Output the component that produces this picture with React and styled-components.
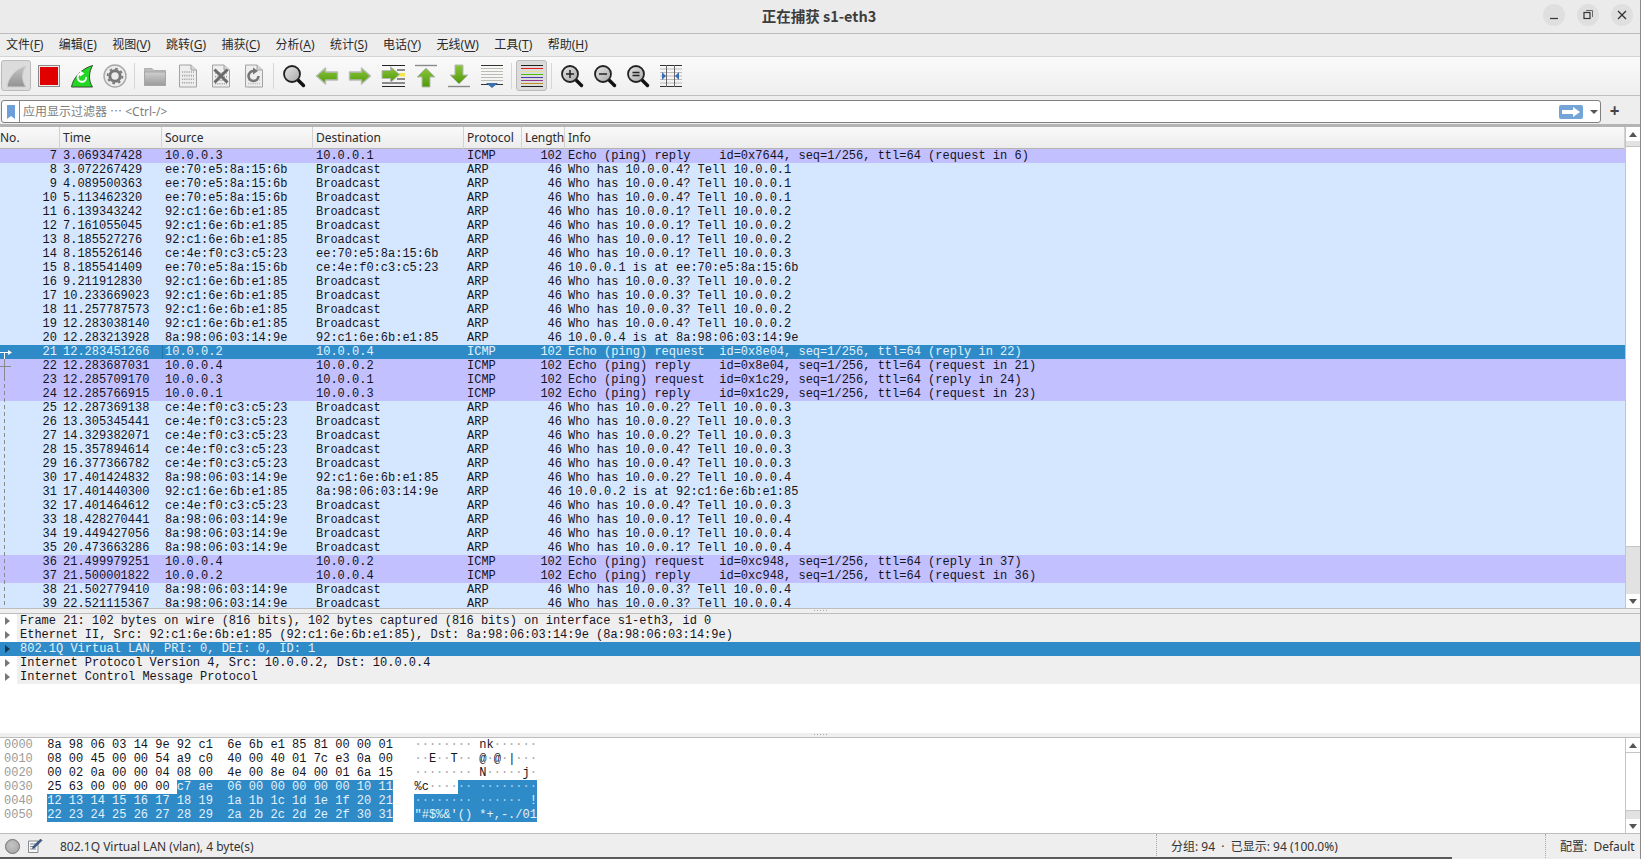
import React from "react";
import styled, { createGlobalStyle } from "styled-components";

const UI = `"Noto Sans", "Noto Sans CJK SC", sans-serif`;
const MONO = `"Liberation Mono", "Noto Sans CJK SC", monospace`;
const SELECT = "#2e8bc8";

const Global = createGlobalStyle`
  html, body { margin: 0; padding: 0; height: 100%; overflow: hidden; background: #ededed; }
  #root { height: 100%; }
  * { box-sizing: border-box; }
`;

const Window = styled.div`
  width: 1641px; height: 859px; display: flex; flex-direction: column;
  border-right: 1px solid #8c8c8c; font-family: ${UI}; font-size: 12px; color: #2a2a2a; position: relative;
`;
const TitleBar = styled.div`
  height: 34px; flex: none; background: #ebebeb; border-bottom: 1px solid #bdbdbd;
  display: flex; align-items: center; justify-content: center; position: relative;
`;
const Title = styled.div`
  font-family: "Noto Sans CJK SC", "Noto Sans", sans-serif; font-weight: 700; font-size: 14.5px; color: #3d3d3d; margin-top: -3px; margin-right: 2px;
`;
const WinButtons = styled.div`
  position: absolute; right: 7px; top: 4px; display: flex; gap: 12px;
`;
const WinButton = styled.div`
  width: 22px; height: 22px; border-radius: 50%; background: #dfdfdf; display: flex; align-items: center; justify-content: center;
`;
const MenuBar = styled.div`
  height: 23px; flex: none; background: #ededed; border-bottom: 1px solid #d4d4d4; display: flex; align-items: center; gap: 15.4px; padding-left: 6px;
`;
const MenuItem = styled.span`
  font-size: 12px; line-height: 16px; color: #2a2a2a; white-space: nowrap;
`;
const Mnemonic = styled.span`
  text-decoration: underline; text-underline-offset: 2px;
`;
const ToolBar = styled.div`
  height: 39px; flex: none; background: linear-gradient(#fafafa, #efefef); border-bottom: 1px solid #bfbfbf; display: flex; align-items: center; padding-bottom: 1px;
`;
const ToolButton = styled.div`
  width: ${(p) => (p.$first ? 32 : 33)}px; height: 31px; flex: none; display: flex; align-items: center; justify-content: center; position: relative;
  &::before {
    content: ""; display: ${(p) => (p.$active ? "block" : "none")}; position: absolute; inset: 0 1px;
    background: #dcdcdc; border: 1px solid #bababa; border-radius: 3px;
  }
  & > svg { position: relative; }
`;
const ToolSep = styled.div`
  width: 7px; flex: none; height: 26px; display: flex; justify-content: center;
  &::before { content: ""; width: 1px; background: #d6d6d6; }
`;
const FilterBar = styled.div`
  height: 31px; flex: none; background: #eeeeee; display: flex; align-items: flex-start; padding: 4px 0 0 1px; border-bottom: 3px solid #b4b4b4;
`;
const FilterInput = styled.div`
  width: 1600px; height: 23px; flex: none; background: #fff; border: 1px solid #808080; border-radius: 3px; display: flex; align-items: center;
`;
const BookmarkBox = styled.div`
  width: 18px; height: 100%; flex: none; border-right: 1px solid #8a8a8a; display: flex; align-items: center; justify-content: center;
`;
const Placeholder = styled.div`
  flex: 1; padding-left: 3px; color: #7e7e7e; font-size: 12px; white-space: pre; margin-top: -2px;
`;
const ApplyButton = styled.div`
  width: 24px; height: 14px; background: #74a4d8; border-radius: 2px; display: flex; align-items: center; justify-content: center; margin-right: 7px;
`;
const DropArrow = styled.div`
  width: 0; height: 0; border-left: 4px solid transparent; border-right: 4px solid transparent; border-top: 4px solid #555; margin-right: 2px;
`;
const PlusButton = styled.div`
  flex: 1; text-align: center; font-size: 17px; line-height: 22px; font-weight: 700; color: #444; margin-right: 12px;
`;
const ListPane = styled.div`
  height: 482px; flex: none; display: flex; position: relative; background: #d4e7ff; overflow: hidden; border-bottom: 1px solid #bdbdbd;
`;
const ListBody = styled.div`
  flex: 1; min-width: 0; overflow: hidden; position: relative;
`;
const HeaderRow = styled.div`
  display: grid; grid-template-columns: 60px 102px 151px 151px 58px 43px 1fr; height: 22px;
  background: linear-gradient(#fafafa, #ececec); border-bottom: 1px solid #b4b4b4;
`;
const HeaderCell = styled.div`
  padding-left: ${(p) => (p.$first ? 0 : 3)}px; border-right: 1px solid #d2d2d2; line-height: 22px; font-size: 12px; color: #2a2a2a; white-space: nowrap;
  letter-spacing: ${(p) => (p.$tight ? "-0.1px" : "0")};
`;
const rowBg = { arp: "#d4e7ff", icmp: "#c3c0ff", sel: SELECT };
const Row = styled.div`
  display: grid; grid-template-columns: 60px 102px 151px 151px 58px 43px 1fr; height: 14px;
  background: ${(p) => rowBg[p.$kind]}; color: ${(p) => (p.$kind === "sel" ? "#e2f1fb" : "#14141e")};
  font-family: ${MONO}; font-size: 12px; line-height: 14px;
`;
const Cell = styled.div`
  padding: 0 3px; white-space: pre; overflow: hidden; text-align: ${(p) => (p.$right ? "right" : "left")};
`;
const FocusCell = styled(Cell)`
  box-shadow: ${(p) => (p.$focus ? "inset 1px 0 0 #2176ad" : "none")};
`;
const Overlay = styled.svg`
  position: absolute; left: 0; top: 0; pointer-events: none;
`;
const Scrollbar = styled.div`
  width: 15px; flex: none; display: flex; flex-direction: column; border-left: 1px solid #c4c4c4; background: #e2e2e2;
`;
const ScrollArrow = styled.div`
  height: 14px; flex: none; background: #fff; display: flex; align-items: center; justify-content: center;
  &::before {
    content: ""; width: 0; height: 0; border-left: 4.5px solid transparent; border-right: 4.5px solid transparent;
    border-${(p) => (p.$down ? "top" : "bottom")}: 5px solid #555;
  }
`;
const Gutter = styled.div`
  flex: 1; background: #e2e2e2; display: flex; flex-direction: column; padding-top: ${(p) => p.$before}px;
`;
const Thumb = styled.div`
  height: ${(p) => p.$size}px; background: #fff; border-top: 1px solid #c4c4c4; border-bottom: 1px solid #c4c4c4;
`;
const Splitter = styled.div`
  height: 5px; flex: none; background: #efefef; border-bottom: 1px solid #bdbdbd; position: relative; display: flex; justify-content: center; align-items: center;
  &::before { content: ""; width: 14px; height: 1px; margin-top: -2px; background-image: radial-gradient(circle, #a8a8a8 0.7px, transparent 0.8px); background-size: 3px 1px; }
`;
const DetailPane = styled.div`
  height: 119px; flex: none; background: #fff; overflow: hidden;
`;
const DetailRow = styled.div`
  height: 14px; display: flex; font-family: ${MONO}; font-size: 12px; line-height: 14px; background: ${(p) => (p.$sel ? SELECT : "transparent")}; color: ${(p) => (p.$sel ? "#e2f1fb" : "#14141e")};
`;
const Twisty = styled.div`
  width: 17px; flex: none; display: flex; align-items: center; justify-content: center; padding-right: 3px;
  &::before { content: ""; width: 0; height: 0; border-top: 4.5px solid transparent; border-bottom: 4.5px solid transparent; border-left: 5px solid ${(p) => (p.$sel ? "#123a55" : "#787878")}; }
`;
const DetailText = styled.div`
  flex: 1; padding-left: 3px; white-space: pre; background: ${(p) => (p.$sel ? "transparent" : "#efefef")};
`;
const HexPane = styled.div`
  height: 96px; flex: none; display: flex; background: #fff; border-bottom: 1px solid #bdbdbd;
`;
const HexBody = styled.div`
  flex: 1; padding: 0 0 0 4px; font-family: ${MONO}; font-size: 12px; line-height: 14px; color: #14141e;
`;
const HexRow = styled.div`
  height: 14px; white-space: pre;
`;
const Offset = styled.span`
  color: #9a9a9a;
`;
const Hl = styled.span`
  background: ${(p) => (p.$on ? SELECT : "transparent")}; color: ${(p) => (p.$on ? "#e2f1fb" : "inherit")}; display: inline-block; height: 14px; vertical-align: top;
`;
const Dim = styled.span`
  color: #a8a8a8;
`;
const StatusBar = styled.div`
  flex: 1; display: flex; align-items: center; background: #eeeeee; font-size: 12px; color: #333; position: relative; padding-bottom: 1px;
`;
const StatusIcons = styled.div`
  width: 60px; flex: none; display: flex; align-items: center; gap: 7px; padding-left: 5px;
`;
const Lamp = styled.div`
  width: 15px; height: 15px; border-radius: 50%; border: 1px solid #6e6e6e; background: radial-gradient(circle at 45% 40%, #c4c4c4, #a2a2a2);
`;
const StatusLeft = styled.div`
  width: 1096px; flex: none; white-space: pre;
`;
const StatusMid = styled.div`
  width: 389px; flex: none; align-self: stretch; display: flex; align-items: center; padding-left: 14px; border-left: 1px dotted #a8a8a8; white-space: pre;
`;
const StatusRight = styled.div`
  flex: 1; align-self: stretch; display: flex; align-items: center; padding-left: 14px; border-left: 1px dotted #a8a8a8; white-space: pre;
`;
const EdgeLine = styled.div`
  position: absolute; left: 0; bottom: 0; height: 2px; width: 1452px; background: #5a5a5a;
`;

/* ---------- drawings ---------- */
const Defs = () => (
  <svg width="0" height="0" style={{ position: "absolute" }}>
    <defs>
      <linearGradient id="fin" x1="0" y1="0" x2="0" y2="1"><stop offset="0" stopColor="#c4c4c4" /><stop offset="1" stopColor="#929292" /></linearGradient>
      <linearGradient id="green" x1="0" y1="0" x2="0" y2="1"><stop offset="0" stopColor="#8cc63f" /><stop offset="1" stopColor="#4f9a06" /></linearGradient>
      <linearGradient id="folder" x1="0" y1="0" x2="0" y2="1"><stop offset="0" stopColor="#d0d0d0" /><stop offset="1" stopColor="#9a9a9a" /></linearGradient>
      <linearGradient id="lens" x1="0" y1="0" x2="1" y2="1"><stop offset="0" stopColor="#e6e6e6" /><stop offset="1" stopColor="#a8a8a8" /></linearGradient>
    </defs>
  </svg>
);
const Ic = ({ children, w = 24, h = 24 }) => <svg width={w} height={h} viewBox={`0 0 ${w} ${h}`}>{children}</svg>;
const FinIcon = () => <Ic><path d="M3 23 C4 14 11 5 22 2 C18 8 17 16 22 23 Z" fill="url(#fin)" stroke="#d0d0d0" /></Ic>;
const StopIcon = () => <Ic><rect x="1.5" y="1.5" width="21" height="21" fill="#eee" stroke="#8a8a8a" /><rect x="3" y="3" width="18" height="18" fill="#e00000" /></Ic>;
const RestartIcon = () => (
  <Ic>
    <path d="M1.5 23 C3 14 11 5 22.5 1.5 C19 8 18 16 22.5 23 Z" fill="#22d822" stroke="#3a4a3a" />
    <path d="M16 13 A4.2 4.2 0 1 1 11 9.5" fill="none" stroke="#fff" strokeWidth="2" />
    <path d="M10 6.5 L14.5 9.5 L10 12.5 Z" fill="#fff" />
  </Ic>
);
const GearIcon = () => (
  <Ic>
    <circle cx="12" cy="12" r="11" fill="#ececec" stroke="#a8a8a8" strokeWidth="1.4" />
    <circle cx="12" cy="12" r="5.2" fill="none" stroke="#787878" strokeWidth="3" />
    <circle cx="12" cy="12" r="7.4" fill="none" stroke="#787878" strokeWidth="1.8" strokeDasharray="2.6 3.2" />
  </Ic>
);
const FolderIcon = () => (
  <Ic>
    <path d="M1.5 21.5 V4.5 H9 L11 6.5 H22.5 V21.5 Z" fill="#bcbcbc" stroke="#b0b0b0" />
    <rect x="1.5" y="8" width="21" height="13.5" fill="url(#folder)" stroke="#a6a6a6" />
  </Ic>
);
const Digits = ({ y = 8, color = "#a6a6a6" }) => (
  <g stroke={color} strokeWidth="1.6" strokeDasharray="1.2 1">
    {[0, 1, 2, 3].map((i) => <line key={i} x1="6" x2="18" y1={y + i * 3.6} y2={y + i * 3.6} />)}
  </g>
);
const Page = ({ children }) => (
  <Ic>
    <path d="M3.5 1 H15 L20.5 6 V23 H3.5 Z" fill="#eeeeee" stroke="#a2a2a2" />
    <path d="M15 1 V6 H20.5" fill="#d8d8d8" stroke="#a2a2a2" />
    {children}
  </Ic>
);
const FileIcon = () => <Page><Digits /></Page>;
const CloseFileIcon = () => <Page><Digits y={9} /><path d="M5.5 5.5 L18.5 18.5 M18.5 5.5 L5.5 18.5" stroke="#6a6a6a" strokeWidth="3" /></Page>;
const ReloadFileIcon = () => (
  <Page>
    <Digits y={16} color="#c0c0c0" />
    <path d="M16.5 12 A5 5 0 1 1 12 7" fill="none" stroke="#757575" strokeWidth="2.6" />
    <path d="M11 3.5 L16 7 L11 10.5 Z" fill="#757575" />
  </Page>
);
const Lens = ({ children }) => (
  <Ic>
    <path d="M15.5 15.5 L21.5 21.5" stroke="#111" strokeWidth="3.4" strokeLinecap="round" />
    <circle cx="10" cy="10" r="8" fill="url(#lens)" stroke="#222" strokeWidth="1.8" />
    {children}
  </Ic>
);
const FindIcon = () => <Lens />;
const ZoomInIcon = () => <Lens><path d="M6 10 H14 M10 6 V14" stroke="#222" strokeWidth="1.5" /></Lens>;
const ZoomOutIcon = () => <Lens><path d="M6 10 H14" stroke="#222" strokeWidth="1.5" /></Lens>;
const ZoomFitIcon = () => <Lens><path d="M6.5 8.5 H13.5 M6.5 11.5 H13.5" stroke="#222" strokeWidth="1.5" /></Lens>;
const ArrowLeftIcon = () => <Ic><path d="M1.5 12 L10.5 4 V8 H22.5 V16 H10.5 V20 Z" fill="url(#green)" stroke="#b9b9b9" strokeWidth="1.4" strokeLinejoin="round" /></Ic>;
const ArrowRightIcon = () => <Ic><path d="M22.5 12 L13.5 4 V8 H1.5 V16 H13.5 V20 Z" fill="url(#green)" stroke="#b9b9b9" strokeWidth="1.4" strokeLinejoin="round" /></Ic>;
const JumpIcon = () => (
  <Ic>
    {[1.5, 6, 10.5, 15, 19, 22.5].map((y, i) => <line key={i} x1={i === 0 || i > 3 ? 1 : 16} x2="24" y1={y} y2={y} stroke="#222" strokeWidth="1" />)}
    <rect x="17" y="9" width="7" height="3.4" fill="#f4e64a" />
    <path d="M18.5 10.5 L9.5 2.5 V6.5 H1 V14.5 H9.5 V18.5 Z" fill="url(#green)" stroke="#b9b9b9" strokeLinejoin="round" />
  </Ic>
);
const TopIcon = () => (
  <Ic>
    <line x1="1" x2="23" y1="1.5" y2="1.5" stroke="#8a8a8a" strokeWidth="1.4" />
    <path d="M12 4 L21 13 H16 V23 H8 V13 H3 Z" fill="url(#green)" stroke="#b9b9b9" strokeLinejoin="round" />
  </Ic>
);
const BottomIcon = () => (
  <Ic>
    <line x1="1" x2="23" y1="22.5" y2="22.5" stroke="#8a8a8a" strokeWidth="1.4" />
    <path d="M12 20 L21 11 H16 V1 H8 V11 H3 Z" fill="url(#green)" stroke="#b9b9b9" strokeLinejoin="round" />
  </Ic>
);
const AutoScrollIcon = () => (
  <Ic>
    <line x1="1" x2="23" y1="1.5" y2="1.5" stroke="#333" />
    {[4.5, 7.5, 10.5, 13.5, 16.5].map((y) => <line key={y} x1="1" x2="23" y1={y} y2={y} stroke="#bcbcb4" />)}
    <line x1="1" x2="23" y1="20.5" y2="20.5" stroke="#333" />
    <path d="M12 24 L6 19 H18 Z" fill="#3b6fb0" />
  </Ic>
);
const ColorizeIcon = () => (
  <Ic>
    {["#222", "#e02020", "#e4e09a", "#48c000", "#4838a8", "#903890", "#c09020", "#222"].map((c, i) => (
      <line key={i} x1="1" x2="23" y1={1.5 + i * 3} y2={1.5 + i * 3} stroke={c} strokeWidth="1" />
    ))}
  </Ic>
);
const ResizeIcon = () => (
  <Ic>
    {[1.5, 22.5].map((y) => <line key={y} x1="1" x2="23" y1={y} y2={y} stroke="#333" />)}
    {[5, 8.5, 12, 15.5, 19].map((y) => <line key={y} x1="1" x2="23" y1={y} y2={y} stroke="#bcbcb4" />)}
    <path d="M7.5 1 V23 M15.5 1 V23" stroke="#666" />
    <path d="M3 8 L7 12 L3 16 Z M20 8 L16 12 L20 16 Z" fill="#3b6fb0" />
  </Ic>
);
const EditIcon = () => (
  <svg width="16" height="16" viewBox="0 0 16 16">
    <path d="M1.5 3 H11 V14.5 H1.5 Z" fill="#f6f6f6" stroke="#8a8a8a" />
    <path d="M3 6 H9 M3 8.5 H8 M3 11 H9" stroke="#7a8aa0" />
    <path d="M13.5 1 L15 2.5 L7.5 10 L5.5 10.5 L6 8.5 Z" fill="#3a5a8a" stroke="#24364f" strokeWidth=".5" />
  </svg>
);

/* ---------- data ---------- */
const A = "ee:70:e5:8a:15:6b", B = "92:c1:6e:6b:e1:85", C = "ce:4e:f0:c3:c5:23", D = "8a:98:06:03:14:9e", BC = "Broadcast";
const who = (q, t) => `Who has 10.0.0.${q}? Tell 10.0.0.${t}`;
const ping = (k, id, tail) => `Echo (ping) ${k === "q" ? "request  " : "reply    "}id=${id}, seq=1/256, ttl=64 (${tail})`;
const rows = [
  [7, "3.069347428", "10.0.0.3", "10.0.0.1", ping("r", "0x7644", "request in 6")],
  [8, "3.072267429", A, BC, who(4, 1)], [9, "4.089500363", A, BC, who(4, 1)], [10, "5.113462320", A, BC, who(4, 1)],
  [11, "6.139343242", B, BC, who(1, 2)], [12, "7.161055045", B, BC, who(1, 2)], [13, "8.185527276", B, BC, who(1, 2)],
  [14, "8.185526146", C, A, who(1, 3)], [15, "8.185541409", A, C, "10.0.0.1 is at ee:70:e5:8a:15:6b"],
  [16, "9.211912830", B, BC, who(3, 2)], [17, "10.233669023", B, BC, who(3, 2)], [18, "11.257787573", B, BC, who(3, 2)],
  [19, "12.283038140", B, BC, who(4, 2)], [20, "12.283213928", D, B, "10.0.0.4 is at 8a:98:06:03:14:9e"],
  [21, "12.283451266", "10.0.0.2", "10.0.0.4", ping("q", "0x8e04", "reply in 22")],
  [22, "12.283687031", "10.0.0.4", "10.0.0.2", ping("r", "0x8e04", "request in 21")],
  [23, "12.285709170", "10.0.0.3", "10.0.0.1", ping("q", "0x1c29", "reply in 24")],
  [24, "12.285766915", "10.0.0.1", "10.0.0.3", ping("r", "0x1c29", "request in 23")],
  [25, "12.287369138", C, BC, who(2, 3)], [26, "13.305345441", C, BC, who(2, 3)], [27, "14.329382071", C, BC, who(2, 3)],
  [28, "15.357894614", C, BC, who(4, 3)], [29, "16.377366782", C, BC, who(4, 3)],
  [30, "17.401424832", D, B, who(2, 4)], [31, "17.401440300", B, D, "10.0.0.2 is at 92:c1:6e:6b:e1:85"],
  [32, "17.401464612", C, BC, who(4, 3)], [33, "18.428270441", D, BC, who(1, 4)], [34, "19.449427056", D, BC, who(1, 4)],
  [35, "20.473663286", D, BC, who(1, 4)],
  [36, "21.499979251", "10.0.0.4", "10.0.0.2", ping("q", "0xc948", "reply in 37")],
  [37, "21.500001822", "10.0.0.2", "10.0.0.4", ping("r", "0xc948", "request in 36")],
  [38, "21.502779410", D, BC, who(3, 4)], [39, "22.521115367", D, BC, who(3, 4)],
];
const details = [
  "Frame 21: 102 bytes on wire (816 bits), 102 bytes captured (816 bits) on interface s1-eth3, id 0",
  "Ethernet II, Src: 92:c1:6e:6b:e1:85 (92:c1:6e:6b:e1:85), Dst: 8a:98:06:03:14:9e (8a:98:06:03:14:9e)",
  "802.1Q Virtual LAN, PRI: 0, DEI: 0, ID: 1",
  "Internet Protocol Version 4, Src: 10.0.0.2, Dst: 10.0.0.4",
  "Internet Control Message Protocol",
];
const hex = [
  ["0000", "8a 98 06 03 14 9e 92 c1  6e 6b e1 85 81 00 00 01", "········ nk······", 99, 99],
  ["0010", "08 00 45 00 00 54 a9 c0  40 00 40 01 7c e3 0a 00", "··E··T·· @·@·|···", 99, 99],
  ["0020", "00 02 0a 00 00 04 08 00  4e 00 8e 04 00 01 6a 15", "········ N·····j·", 99, 99],
  ["0030", "25 63 00 00 00 00 c7 ae  06 00 00 00 00 00 10 11", "%c······ ········", 18, 6],
  ["0040", "12 13 14 15 16 17 18 19  1a 1b 1c 1d 1e 1f 20 21", "········ ······ !", 0, 0],
  ["0050", "22 23 24 25 26 27 28 29  2a 2b 2c 2d 2e 2f 30 31", "\"#$%&'() *+,-./01", 0, 0],
];
const Ascii = ({ text }) => text.split(/(·+)/).map((s, i) => (s[0] === "·" ? <Dim key={i}>{s}</Dim> : <React.Fragment key={i}>{s}</React.Fragment>));
const AsciiSel = styled.span`color: #e2f1fb; & ${Dim} { color: #a9d2ec; }`;

const menus = [["文件", "F"], ["编辑", "E"], ["视图", "V"], ["跳转", "G"], ["捕获", "C"], ["分析", "A"], ["统计", "S"], ["电话", "Y"], ["无线", "W"], ["工具", "T"], ["帮助", "H"]];
const cols = ["No.", "Time", "Source", "Destination", "Protocol", "Length", "Info"];
const tools = [
  [FinIcon, "on"], [StopIcon], [RestartIcon], [GearIcon], null,
  [FolderIcon], [FileIcon], [CloseFileIcon], [ReloadFileIcon], null,
  [FindIcon], [ArrowLeftIcon], [ArrowRightIcon], [JumpIcon], [TopIcon], [BottomIcon], [AutoScrollIcon], null,
  [ColorizeIcon, "on"], null,
  [ZoomInIcon], [ZoomOutIcon], [ZoomFitIcon], [ResizeIcon],
];

export default function App() {
  return (
    <Window>
      <Global />
      <Defs />
      <TitleBar>
        <Title>正在捕获 s1-eth3</Title>
        <WinButtons>
          <WinButton><svg width="12" height="12" viewBox="0 0 12 12"><path d="M2 9.5 H10" stroke="#333" strokeWidth="1.2" /></svg></WinButton>
          <WinButton><svg width="12" height="12" viewBox="0 0 12 12"><rect x="2" y="3.5" width="6" height="6" fill="none" stroke="#333" strokeWidth="1.2" /><path d="M4 1.5 H10.5 V8" fill="none" stroke="#666" /></svg></WinButton>
          <WinButton><svg width="12" height="12" viewBox="0 0 12 12"><path d="M2 2 L10 10 M10 2 L2 10" stroke="#333" strokeWidth="1.3" /></svg></WinButton>
        </WinButtons>
      </TitleBar>
      <MenuBar>
        {menus.map(([t, m]) => <MenuItem key={m}>{t}(<Mnemonic>{m}</Mnemonic>)</MenuItem>)}
      </MenuBar>
      <ToolBar>
        {tools.map((t, i) => t ? (
          <ToolButton key={i} $first={i === 0} $active={t[1] === "on"}>{React.createElement(t[0])}</ToolButton>
        ) : <ToolSep key={i} />)}
      </ToolBar>
      <FilterBar>
        <FilterInput>
          <BookmarkBox>
            <svg width="8" height="14" viewBox="0 0 8 14"><path d="M0 0 H8 V14 L4 11 L0 14 Z" fill="#6f9fd8" /></svg>
          </BookmarkBox>
          <Placeholder>应用显示过滤器 ⋯ &lt;Ctrl-/&gt;</Placeholder>
          <ApplyButton>
            <svg width="18" height="10" viewBox="0 0 18 10"><path d="M0 3 H11 V0 L18 5 L11 10 V7 H0 Z" fill="#fff" /></svg>
          </ApplyButton>
          <DropArrow />
        </FilterInput>
        <PlusButton>+</PlusButton>
      </FilterBar>
      <ListPane>
        <ListBody>
          <HeaderRow>
            {cols.map((c, i) => <HeaderCell key={c} $first={i === 0} $tight={c === "Length"}>{c}</HeaderCell>)}
          </HeaderRow>
          {rows.map(([n, t, s, d, info]) => {
            const kind = n === 21 ? "sel" : info.startsWith("Echo") ? "icmp" : "arp";
            const proto = info.startsWith("Echo") ? "ICMP" : "ARP";
            return (
              <Row key={n} $kind={kind}>
                <Cell $right>{n}</Cell>
                <Cell>{t}</Cell>
                <FocusCell $focus={n === 21}>{s}</FocusCell>
                <Cell>{d}</Cell>
                <Cell>{proto}</Cell>
                <Cell $right>{proto === "ICMP" ? 102 : 46}</Cell>
                <Cell>{info}</Cell>
              </Row>
            );
          })}
          <Overlay width="14" height="482">
            <path d="M0 225.5 H9" stroke="#fff" />
            <path d="M8 223 L12 225.5 L8 228 Z" fill="#fff" />
            <path d="M4.5 225.5 V232" stroke="#fff" />
            <path d="M0 239.5 H11" stroke="#8a8a8a" />
            <path d="M4.5 232 V250" stroke="#8a8a8a" />
            <path d="M4.5 250 V482" stroke="#8a8a8a" strokeDasharray="4 3" />
          </Overlay>
        </ListBody>
        <Scrollbar>
          <ScrollArrow />
          <Gutter $before={5}><Thumb $size={401} /></Gutter>
          <ScrollArrow $down />
        </Scrollbar>
      </ListPane>
      <Splitter />
      <DetailPane>
        {details.map((d, i) => (
          <DetailRow key={i} $sel={i === 2}>
            <Twisty $sel={i === 2} />
            <DetailText $sel={i === 2}>{d}</DetailText>
          </DetailRow>
        ))}
      </DetailPane>
      <Splitter />
      <HexPane>
        <HexBody>
          {hex.map(([off, h, a, hs, as]) => (
            <HexRow key={off}>
              <Offset>{off}</Offset>{"  "}<Hl>{h.slice(0, hs)}</Hl><Hl $on>{h.slice(hs)}</Hl>{"   "}<Hl><Ascii text={a.slice(0, as)} /></Hl><Hl $on><AsciiSel><Ascii text={a.slice(as)} /></AsciiSel></Hl>
            </HexRow>
          ))}
        </HexBody>
        <Scrollbar>
          <ScrollArrow />
          <Gutter $before={0}><Thumb $size={59} /></Gutter>
          <ScrollArrow $down />
        </Scrollbar>
      </HexPane>
      <StatusBar>
        <StatusIcons><Lamp /><EditIcon /></StatusIcons>
        <StatusLeft>802.1Q Virtual LAN (vlan), 4 byte(s)</StatusLeft>
        <StatusMid>分组: 94  ·  已显示: 94 (100.0%)</StatusMid>
        <StatusRight>配置:  Default</StatusRight>
        <EdgeLine />
      </StatusBar>
    </Window>
  );
}
